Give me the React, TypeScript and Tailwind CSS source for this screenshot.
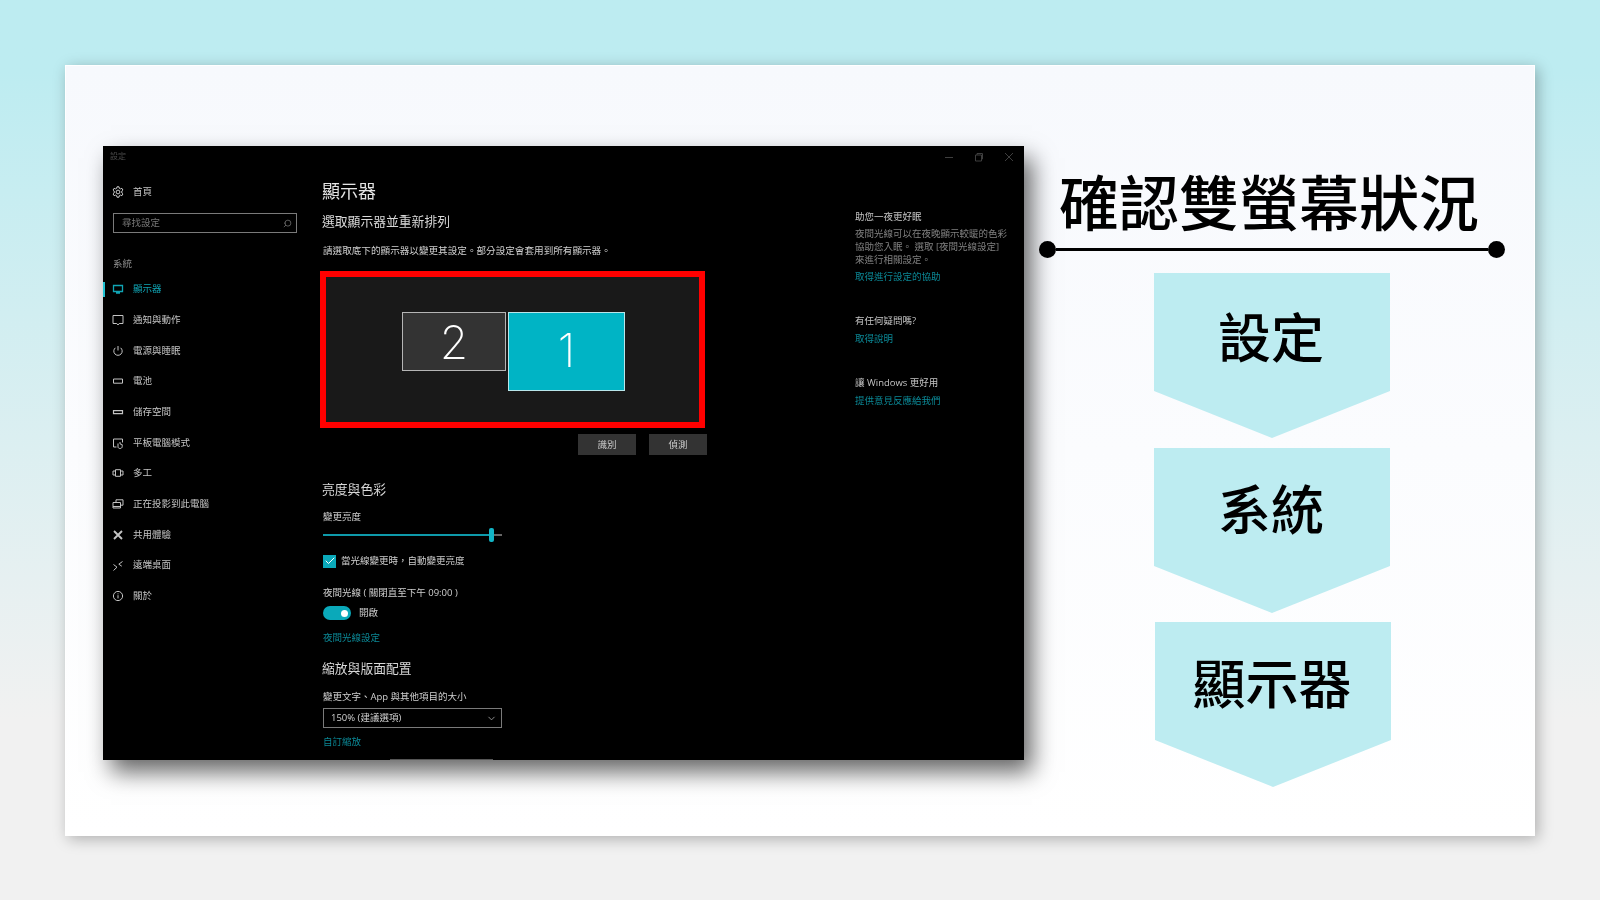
import React from 'react';
import { Check, ChevronDown, Search } from 'lucide-react';

const icon = (children: React.ReactNode) => (
  <svg width="14" height="14" viewBox="0 0 14 14" fill="none" stroke="currentColor" strokeWidth="1">
    {children}
  </svg>
);

const icons = {
  gear: icon(
    <>
      <circle cx="7" cy="7" r="1.9" />
      <path d="M6 1.8h2l.3 1.5 1.2.6 1.4-.6 1 1.7-1.1 1 .1 1-.1 1 1.1 1-1 1.7-1.4-.6-1.2.6-.3 1.5H6l-.3-1.5-1.2-.6-1.4.6-1-1.7 1.1-1-.1-1 .1-1-1.1-1 1-1.7 1.4.6 1.2-.6z" />
    </>,
  ),
  monitor: icon(<path d="M2.5 3.5h9v6h-9zM7 9.5v1.5M5 11h4" strokeWidth="1.3" />),
  note: icon(<path d="M2 2.5h10v8H8.2L7 12 5.8 10.5H2z" />),
  power: icon(
    <>
      <path d="M4.4 3.8a4.2 4.2 0 1 0 5.2 0" />
      <path d="M7 2v4.5" />
    </>,
  ),
  battery: icon(<path d="M2.5 5h9v4.2h-9z" />),
  storage: icon(<path d="M2.5 5.6h9v3h-9z" strokeWidth="1.2" />),
  tablet: icon(<path d="M5.5 11H2.5V3h9v3.5M7 7.5v3.4c0 1 .9 1.6 2 1.6s2.2-.7 2.2-1.8V8.6L9 7.9V6" />),
  multi: icon(<path d="M4.5 3.7h5v6.6h-5zM4.5 5H2v4h2.5M9.5 5H12v4H9.5" />),
  project: icon(<path d="M5 5.5V2.8h7v5.4H9.5M2 5.5h7.5v5.5H2zM2 9.5h7.5" />),
  share: icon(<path d="M3 3l8 8M11 3l-8 8" strokeWidth="1.9" />),
  remote: icon(<path d="M2.5 5.5l3.5 2.7-3.5 3.3M11.5 2.5L7.8 5.2l3 2" />),
  info: icon(
    <>
      <circle cx="7" cy="7" r="4.6" />
      <path d="M7 6.2v3.2M7 4.4v.9" />
    </>,
  ),
};

const navItems: { label: string; icon: keyof typeof icons; active?: boolean }[] = [
  { label: '顯示器', icon: 'monitor', active: true },
  { label: '通知與動作', icon: 'note' },
  { label: '電源與睡眠', icon: 'power' },
  { label: '電池', icon: 'battery' },
  { label: '儲存空間', icon: 'storage' },
  { label: '平板電腦模式', icon: 'tablet' },
  { label: '多工', icon: 'multi' },
  { label: '正在投影到此電腦', icon: 'project' },
  { label: '共用體驗', icon: 'share' },
  { label: '遠端桌面', icon: 'remote' },
  { label: '關於', icon: 'info' },
];

const Sidebar = () => (
  <aside className="w-[220px] shrink-0 flex flex-col text-[9.5px] text-[#c4c4c4]">
    <div className="h-[20px] pl-[7px] flex items-center text-[8px] text-[#4a4a4a]">設定</div>
    <div className="h-[47px] flex items-center pl-[8px] gap-[8px] pt-[5px]">
      <span className="text-[#cfcfcf]">{icons.gear}</span>
      <span>首頁</span>
    </div>
    <div className="ml-[10px] w-[184px] h-[20px] border border-[#7a7a7a] flex items-center justify-between pl-[8px] pr-[4px] text-[#777]">
      <span>尋找設定</span>
      <Search size={9} className="-scale-x-100" />
    </div>
    <div className="pl-[10px] mt-[23px] pt-[1px] h-[18px] text-[#8a8a8a]">系統</div>
    <nav className="flex flex-col">
      {navItems.map((item) => (
        <div
          key={item.label}
          className={`relative h-[30.7px] flex items-center pl-[8px] gap-[8px] ${item.active ? 'text-[#10a5b5]' : ''}`}
        >
          {item.active && <span className="absolute left-0 top-[8px] h-[15px] w-[2px] bg-[#1fc3d3]" />}
          {icons[item.icon]}
          <span>{item.label}</span>
        </div>
      ))}
    </nav>
  </aside>
);

const Heading = ({ children, className = '' }: { children: React.ReactNode; className?: string }) => (
  <div className={`-ml-[1px] text-[12.8px] leading-[18px] text-[#d8d8d8] ${className}`}>{children}</div>
);

const DisplayBtn = ({ children }: { children: React.ReactNode }) => (
  <div className="w-[58px] h-[21px] pt-[1px] bg-[#333333] flex items-center justify-center text-[9.5px] text-[#c8c8c8]">
    {children}
  </div>
);

const Main = () => (
  <main className="w-[532px] shrink-0 pt-[33px] text-[9.5px] text-[#cfcfcf]">
    <div className="-ml-[1px] text-[18px] leading-[24px] text-[#e4e4e4]">顯示器</div>
    <Heading className="mt-[9px]">選取顯示器並重新排列</Heading>
    <div className="mt-[14px] leading-[14px] text-[#d0d0d0] text-[9.6px]">
      請選取底下的顯示器以變更其設定。部分設定會套用到所有顯示器。
    </div>
    <div className="mt-[13px] -ml-[3px] w-[385px] h-[157px] border-[6px] border-[#ff0000] bg-[#191919] flex items-start pt-[35px] pl-[76px] gap-[2px]">
      <div className="w-[104px] h-[59px] bg-[#333333] border border-[#b5b5b5] flex items-center justify-center">
        <span className="text-[46px] leading-none font-extralight text-white [font-family:Inter,sans-serif]">2</span>
      </div>
      <div className="w-[117px] h-[79px] bg-[#00b4c5] border border-[#b9e6ea] flex items-center justify-center">
        <span className="text-[46px] leading-none font-extralight text-white [font-family:Inter,sans-serif] -translate-y-[2px]">1</span>
      </div>
    </div>
    <div className="mt-[6px] -ml-[1px] w-[385px] flex justify-end gap-[13px]">
      <DisplayBtn>識別</DisplayBtn>
      <DisplayBtn>偵測</DisplayBtn>
    </div>
    <Heading className="mt-[25px]">亮度與色彩</Heading>
    <div className="mt-[12px] leading-[14px]">變更亮度</div>
    <div className="mt-[4px] w-[179px] h-[14px] flex items-center">
      <div className="h-[2px] w-[166px] bg-[#0e9aaa]" />
      <div className="h-[14px] w-[5px] rounded-[2px] bg-[#12b5c6]" />
      <div className="h-[2px] w-[8px] bg-[#666]" />
    </div>
    <div className="mt-[12px] flex items-center gap-[5px]">
      <div className="w-[13px] h-[13px] bg-[#0aa9ba] flex items-center justify-center">
        <Check size={12} strokeWidth={2} className="text-white" />
      </div>
      <span className="leading-[14px]">{'當光線變更時\uFF0C自動變更亮度'}</span>
    </div>
    <div className="mt-[18px] leading-[14px]">夜間光線 ( 關閉直至下午 09:00 )</div>
    <div className="mt-[6px] flex items-center gap-[8px]">
      <div className="w-[28px] h-[14px] rounded-full bg-[#0aa9ba] flex items-center justify-end pr-[3px]">
        <div className="w-[7px] h-[7px] rounded-full bg-white" />
      </div>
      <span>開啟</span>
    </div>
    <div className="mt-[11px] leading-[14px] text-[#0b8896]">夜間光線設定</div>
    <Heading className="mt-[14px]">縮放與版面配置</Heading>
    <div className="mt-[13px] leading-[14px]">變更文字、App 與其他項目的大小</div>
    <div className="mt-[4px] w-[179px] h-[20px] border border-[#7a7a7a] flex items-center justify-between pl-[7px] pr-[4px] text-[#d0d0d0]">
      <span>150% (建議選項)</span>
      <ChevronDown size={11} className="text-[#999]" />
    </div>
    <div className="mt-[7px] leading-[14px] text-[#0b8896]">自訂縮放</div>
    <div className="ml-[67px] mt-[10px] w-[103px] h-[20px] border-t border-[#555]" />
  </main>
);

const Aside = () => (
  <div className="flex-1 pt-[64px] pr-[14px] text-[9.5px] leading-[13px] text-[#808080]">
    <div className="text-[#c4c4c4]">助您一夜更好眠</div>
    <div className="mt-[4px]">
      夜間光線可以在夜晚顯示較暖的色彩
      <br />
      協助您入眠。 選取 [夜間光線設定]
      <br />
      來進行相關設定。
    </div>
    <div className="mt-[4px] text-[#0b8896]">取得進行設定的協助</div>
    <div className="mt-[31px] text-[#c4c4c4]">有任何疑問嗎?</div>
    <div className="mt-[5px] text-[#0b8896]">取得說明</div>
    <div className="mt-[31px] text-[#c4c4c4]">讓 Windows 更好用</div>
    <div className="mt-[5px] text-[#0b8896]">提供意見反應給我們</div>
  </div>
);

const WindowControls = () => (
  <div className="absolute right-[10px] top-[6px] flex items-center gap-[20px] text-[#3f3f3f]">
    <svg width="10" height="10" viewBox="0 0 10 10" fill="none" stroke="currentColor"><path d="M1 5.5h8" /></svg>
    <svg width="10" height="10" viewBox="0 0 10 10" fill="none" stroke="currentColor"><path d="M1.5 3h6v6h-6zM3 3V1.5h5.5V7H7.5" /></svg>
    <svg width="10" height="10" viewBox="0 0 10 10" fill="none" stroke="currentColor"><path d="M1 1l8 8M9 1l-8 8" /></svg>
  </div>
);

const Step = ({ label, className = '' }: { label: string; className?: string }) => (
  <div className={`w-[236px] h-[165px] bg-[#bdecf1] [clip-path:polygon(0_0,100%_0,100%_71.5%,50%_100%,0_71.5%)] flex justify-center pr-[2px] ${className}`}>
    <span className="text-[53px] leading-[70px] font-medium text-black">{label}</span>
  </div>
);

export default function App() {
  return (
    <div lang="zh-Hant" className="w-[1600px] h-[900px] overflow-hidden bg-gradient-to-b from-[#bdecf1] from-[8%] to-[#f1f1f1] to-[80%] pt-[65px] pl-[65px] font-['Noto_Sans_CJK_TC',sans-serif]">
      <div className="w-[1470px] h-[771px] border border-white bg-gradient-to-b from-[#f7f9fd] to-white shadow-[3px_3px_14px_rgba(0,0,0,0.28)] flex pt-[80px] pl-[37px]">
        <div className="relative w-[921px] h-[614px] bg-black shadow-[8px_12px_22px_rgba(0,0,0,0.6)] overflow-hidden font-['Open_Sans','Noto_Sans_CJK_TC',sans-serif]">
          <div className="flex h-full blur-[0.35px]">
            <Sidebar />
            <Main />
            <Aside />
          </div>
          <WindowControls />
        </div>
        <div className="w-[466px] ml-[15px] flex flex-col items-center">
          <div className="text-[60px] leading-[72px] font-medium text-black whitespace-nowrap mt-[18px] mr-[6px]">確認雙螢幕狀況</div>
          <div className="w-full flex items-center mt-[5px]">
            <span className="w-[17px] h-[17px] rounded-full bg-black shrink-0" />
            <span className="flex-1 h-[3px] bg-black" />
            <span className="w-[17px] h-[17px] rounded-full bg-black shrink-0" />
          </div>
          <Step label="設定" className="mt-[15px] pt-[27px]" />
          <Step label="系統" className="mt-[10px] pt-[24px]" />
          <Step label="顯示器" className="mt-[9px] ml-[2px] pt-[24px]" />
        </div>
      </div>
    </div>
  );
}
